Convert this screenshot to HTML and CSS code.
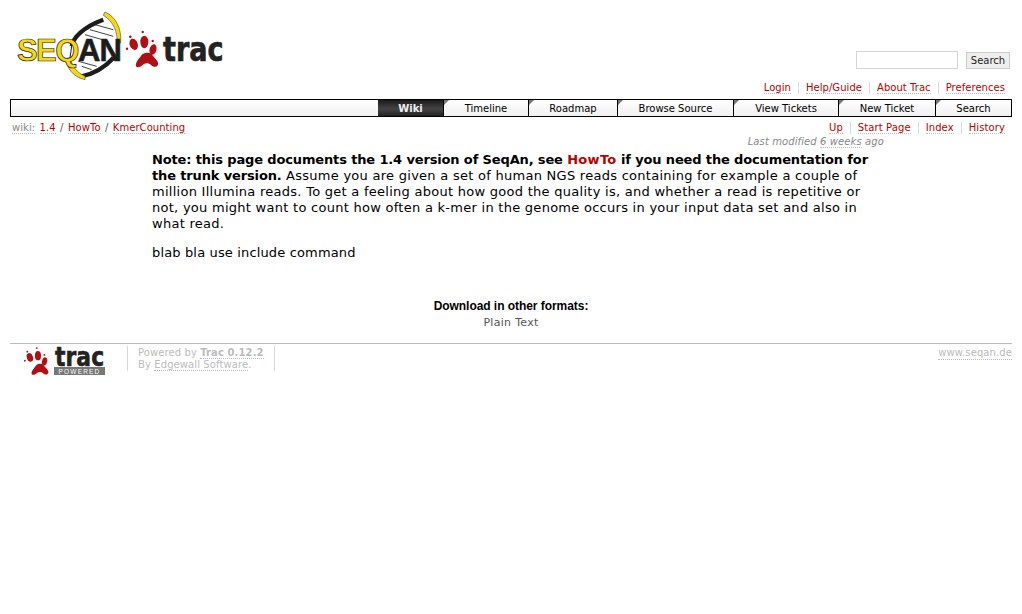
FILE: index.html
```html
<!DOCTYPE html>
<html lang="en">
<head>
    <meta charset="UTF-8">
    <title>KmerCounting – SeqAn</title>
    <link rel="stylesheet" href="styles.css">
</head>
<body>
    <svg class="defs" width="0" height="0">
        <defs>
            <g id="paw" fill="#b00f14">
                <path d="M14 40C13 36 18 32 20 28.5C23 26 28 26 30 28.5C32 32 37 35 36 38.5C35 42 31 41 29 39C27 37 24 37 22 38C20 40 15 43 14 40Z"/>
                <ellipse cx="11.7" cy="18.3" rx="4" ry="5.8" transform="rotate(-20 11.7 18.3)"/>
                <ellipse cx="22.3" cy="16" rx="4" ry="6.2"/>
                <ellipse cx="31" cy="23.5" rx="3.4" ry="5.4" transform="rotate(15 31 23.5)"/>
                <circle cx="8.3" cy="10.7" r="1.3"/>
                <circle cx="20.7" cy="6" r="1.2"/>
                <circle cx="30.7" cy="15" r="1.2"/>
                <circle cx="5" cy="22.7" r="1.2"/>
            </g>
        </defs>
    </svg>

    <div class="banner">
        <a class="logo" href="#">
            <svg width="210" height="72" viewBox="0 0 210 72">
                <g stroke="#444" stroke-width="1">
                    <path d="M80 14.7L98.3 19.7"/>
                    <path d="M75 19.7L98.3 26.3"/>
                    <path d="M70 24.7L93.3 31.3"/>
                    <path d="M63.3 51.3L81.7 56.3"/>
                    <path d="M66.7 56.3L76.7 59.7"/>
                </g>
                <path d="M88.3 9.7C68 17 58 28 56.7 36" fill="none" stroke="#1c1c1c" stroke-width="4.2"/>
                <path d="M56.7 36L55 48" fill="none" stroke="#1c1c1c" stroke-width="1"/>
                <path d="M98.3 48C92 55 82 63 66.7 66.3" fill="none" stroke="#1c1c1c" stroke-width="4.2"/>
                <path d="M90 2C100 6 107 18 105.7 33L102 33C103 22 98 11 88.3 5.3Z" fill="#f5d80f" stroke="#222" stroke-width="0.5"/>
                <path d="M51.7 48C51 58 58 67 70 69.7L70 66C62 63 57 56 55.4 48Z" fill="#f5d80f" stroke="#222" stroke-width="0.5"/>
                <text class="seq" x="2" y="51">SEQ</text>
                <text class="an" x="63" y="51">AN</text>
                <text class="trac-big" transform="translate(148 51) scale(0.82 1)">trac</text>
                <use href="#paw" transform="translate(107 16)"/>
            </svg>
        </a>
        <form class="search-form">
            <input class="search-input" type="text">
            <button class="search-btn" type="button">Search</button>
        </form>
    </div>

    <ul class="metanav">
        <li><a href="#">Login</a></li>
        <li><a href="#">Help/Guide</a></li>
        <li><a href="#">About Trac</a></li>
        <li><a href="#">Preferences</a></li>
    </ul>

    <div class="mainnav">
        <a class="tab active w-wiki" href="#">Wiki</a>
        <a class="tab w-timeline" href="#">Timeline</a>
        <a class="tab w-roadmap" href="#">Roadmap</a>
        <a class="tab w-browse" href="#">Browse Source</a>
        <a class="tab w-view" href="#">View Tickets</a>
        <a class="tab w-new" href="#">New Ticket</a>
        <a class="tab w-search" href="#">Search</a>
    </div>

    <div class="ctxt">
        <div class="path">
            <span class="dim">wiki:</span> <a href="#">1.4</a> <span class="sep">/</span> <a href="#">HowTo</a> <span class="sep">/</span> <a href="#">KmerCounting</a>
        </div>
        <ul class="ctxtnav">
            <li><a href="#">Up</a></li>
            <li><a href="#">Start Page</a></li>
            <li><a href="#">Index</a></li>
            <li><a href="#">History</a></li>
        </ul>
    </div>

    <div class="content">
        <p class="modified">Last modified <span class="dotted">6 weeks</span> ago</p>
        <p class="para para-long"><strong>Note: this page documents the 1.4 version of SeqAn, see <a href="#">HowTo</a> if you need the documentation for the trunk version.</strong> Assume you are given a set of human NGS reads containing for example a couple of million Illumina reads. To get a feeling about how good the quality is, and whether a read is repetitive or not, you might want to count how often a k-mer in the genome occurs in your input data set and also in what read.</p>
        <p class="para">blab bla use include command</p>
    </div>

    <div class="altlinks">
        <h3>Download in other formats:</h3>
        <a href="#">Plain Text</a>
    </div>

    <div class="footer">
        <a class="trac-logo" href="#">
            <svg width="84" height="34" viewBox="0 0 84 34">
                <use href="#paw" transform="translate(-3 -2.5) scale(0.76)"/>
                <text class="trac-small" transform="translate(31 20) scale(0.84 1)">trac</text>
                <rect x="30" y="21" width="51" height="8" fill="#777"/>
                <text class="powered" x="55.5" y="27.5">POWERED</text>
            </svg>
        </a>
        <div class="powered-by">
            Powered by <a class="strong" href="#">Trac 0.12.2</a><br>
            By <a href="#">Edgewall Software</a>.
        </div>
        <a class="site" href="#">www.seqan.de</a>
    </div>
</body>
</html>
```

FILE: styles.css
```css
* {
    box-sizing: border-box;
}

body {
    margin: 0;
    padding: 0 10px;
    background: #fff;
    color: #000;
    font-family: "DejaVu Sans", Verdana, sans-serif;
    font-size: 13px;
}

a {
    color: #b00;
    text-decoration: none;
}

.defs {
    display: block;
}

/* banner */
.banner {
    display: flex;
    justify-content: space-between;
    align-items: flex-end;
    height: 77px;
}

.logo {
    display: block;
    align-self: flex-start;
    margin: 10px 0 0 5px;
    height: 72px;
}

.seq, .an {
    font-family: "Liberation Sans", Arial, sans-serif;
    font-weight: 700;
    font-size: 31px;
}

.seq {
    fill: #f5d80f;
    stroke: #222;
    stroke-width: 0.7px;
    letter-spacing: -1.6px;
}

.an {
    fill: #1c1c1c;
    stroke: #1c1c1c;
    stroke-width: 0.6px;
    letter-spacing: -1px;
}

.trac-big {
    font-family: "DejaVu Sans", sans-serif;
    font-weight: 700;
    font-size: 33px;
    fill: #222;
    stroke: #222;
    stroke-width: 0.7px;
}

.search-form {
    display: flex;
    align-items: center;
    gap: 8px;
    margin-right: 2px;
    margin-bottom: 8px;
}

.search-input {
    width: 102px;
    height: 18px;
    border: 1px solid #d4d4d4;
    padding: 0;
    background: #fff;
}

.search-btn {
    width: 44px;
    height: 17px;
    padding: 0;
    border: 1px solid #ccc;
    background: #eee;
    color: #222;
    font-family: "DejaVu Sans", Verdana, sans-serif;
    font-size: 10px;
}

/* meta nav */
.metanav, .ctxtnav {
    display: flex;
    justify-content: flex-end;
    margin: 0;
    padding: 0;
    list-style: none;
    font-size: 10px;
}

.metanav {
    height: 22px;
    align-items: flex-start;
    padding: 5px 7px 0 0;
    letter-spacing: 0.05px;
}

.metanav li, .ctxtnav li {
    border-left: 1px solid #d7d7d7;
    line-height: 12px;
    padding: 0 7px;
}

.metanav li:first-child, .ctxtnav li:first-child {
    border-left: none;
}

.metanav li:last-child, .ctxtnav li:last-child {
    padding-right: 0;
}

.metanav a, .ctxtnav a, .path a {
    border-bottom: 1px dotted #bbb;
}

/* main nav */
.mainnav {
    display: flex;
    justify-content: flex-end;
    height: 18px;
    border: 1px solid #000;
    background: linear-gradient(#fff, #f0f0f0);
    font-size: 10px;
}

.tab {
    position: relative;
    display: block;
    border-left: 1px solid #000;
    color: #000;
    text-align: center;
    line-height: 18px;
}

.tab::before {
    content: "";
    position: absolute;
    top: 0;
    left: 0;
    border-top: 5px solid #777;
    border-right: 5px solid transparent;
}

.tab.active {
    border-left: none;
    background: linear-gradient(#1a1a1a, #444 55%, #222);
    color: #eee;
    font-weight: 700;
    line-height: 17px;
}

.tab.active::before {
    display: none;
}

.w-wiki { width: 65px; }
.w-timeline { width: 85px; }
.w-roadmap { width: 89px; }
.w-browse { width: 116px; }
.w-view { width: 105px; }
.w-new { width: 97px; }
.w-search { width: 76px; }

/* context nav */
.ctxt {
    display: flex;
    justify-content: space-between;
    height: 17px;
    padding: 5px 15px 0 2px;
    font-size: 10px;
    line-height: 12px;
}

.path {
    letter-spacing: 0.05px;
    word-spacing: 1.2px;
}

.ctxtnav {
    padding-right: 0;
    margin-right: -8px;
    letter-spacing: 0.1px;
}

.dim {
    color: #888;
    border-bottom: 1px dotted #bbb;
}

.sep {
    color: #555;
}

/* content */
.content {
    padding: 0 142px;
}

.modified {
    margin: 0 -14px 0 0;
    height: 18px;
    color: #888;
    font-size: 10px;
    font-style: italic;
    letter-spacing: 0.1px;
    line-height: 15px;
    text-align: right;
}

.dotted {
    border-bottom: 1px dotted #bbb;
}

.para {
    margin: 0 0 13px;
    letter-spacing: 0.15px;
    line-height: 16px;
}

.para-long {
    letter-spacing: 0.27px;
}

.para strong {
    letter-spacing: -0.14px;
}

.para a {
    font-weight: 700;
    letter-spacing: 0.3px;
}

/* download links */
.altlinks {
    margin-top: 37px;
    text-align: center;
}

.altlinks h3 {
    margin: 0;
    font-family: "Liberation Sans", Arial, sans-serif;
    font-size: 12px;
    letter-spacing: -0.05px;
    line-height: 16px;
}

.altlinks a {
    color: #555;
    font-size: 11px;
    letter-spacing: 0.3px;
    line-height: 15px;
}

/* footer */
.footer {
    display: flex;
    align-items: flex-start;
    margin-top: 13px;
    padding-top: 2px;
    border-top: 1px solid #bbb;
    color: #bbb;
    font-size: 10px;
    letter-spacing: 0.1px;
    line-height: 12px;
}

.trac-logo {
    display: block;
    margin-left: 14px;
    width: 84px;
    height: 34px;
}

.trac-small {
    font-family: "DejaVu Sans", sans-serif;
    font-weight: 700;
    font-size: 26px;
    fill: #222;
    stroke: #222;
    stroke-width: 0.6px;
}

.powered {
    font-family: "Liberation Sans", Arial, sans-serif;
    font-size: 6.5px;
    letter-spacing: 1.2px;
    fill: #fff;
    text-anchor: middle;
}

.powered-by {
    margin-left: 19px;
    padding: 1px 10px;
    width: 148px;
    height: 25px;
    border-left: 1px solid #d7d7d7;
    border-right: 1px solid #d7d7d7;
}

.powered-by a, .site {
    color: #bbb;
    border-bottom: 1px dotted #bbb;
}

.powered-by .strong {
    font-weight: 700;
}

.site {
    margin-left: auto;
    margin-top: 1px;
}
```
